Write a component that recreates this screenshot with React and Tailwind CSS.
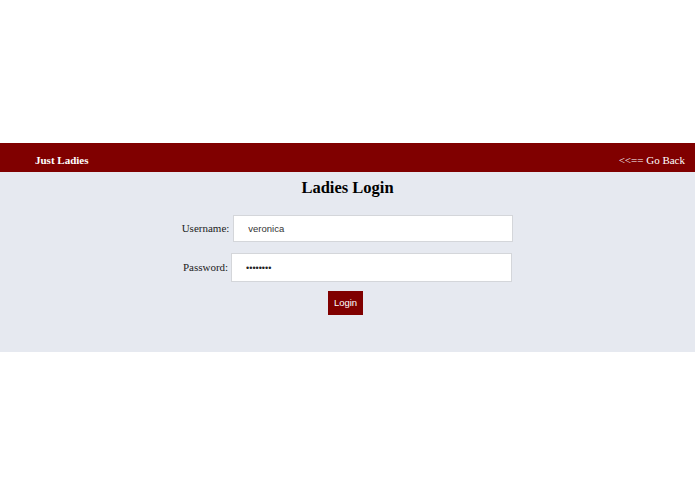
export default function App() {
  return (
    <div className="w-full min-h-[494px] bg-white font-['Liberation_Serif',serif]">
      <div className="h-[143px]" />
      <header className="h-[29px] bg-[#800000] flex items-center justify-between pl-[35px] pr-[10px] pt-[5px] text-white text-[11px]">
        <span className="font-bold">Just Ladies</span>
        <a href="#" className="text-white">&lt;&lt;== Go Back</a>
      </header>
      <main className="h-[180px] bg-[#e6e9f0] flex flex-col items-center">
        <h1 className="mt-[6px] text-[16.5px] font-bold text-black leading-[20px]">Ladies Login</h1>
        <form className="mt-[17px] flex flex-col items-center w-full" onSubmit={(e) => e.preventDefault()}>
          <div className="flex items-center justify-center gap-[4px]">
            <label className="text-[11px] text-[#222]">Username:</label>
            <input
              type="text"
              defaultValue="veronica"
              className="w-[280px] h-[27px] bg-white border border-[#d4d6da] pl-[14px] text-[9.5px] text-[#333] font-['Liberation_Sans',sans-serif] outline-none"
            />
          </div>
          <div className="mt-[11px] flex items-center justify-center gap-[3px]">
            <label className="text-[11px] text-[#222]">Password:</label>
            <input
              type="password"
              defaultValue="veronica"
              className="w-[281px] h-[29px] bg-white border border-[#d4d6da] pl-[14px] text-[9px] text-[#222] font-['Liberation_Sans',sans-serif] outline-none"
            />
          </div>
          <button
            type="submit"
            className="mt-[9px] mr-[4px] w-[35px] h-[24px] bg-[#800000] text-white text-[9.5px] font-['Liberation_Sans',sans-serif]"
          >
            Login
          </button>
        </form>
      </main>
    </div>
  );
}
